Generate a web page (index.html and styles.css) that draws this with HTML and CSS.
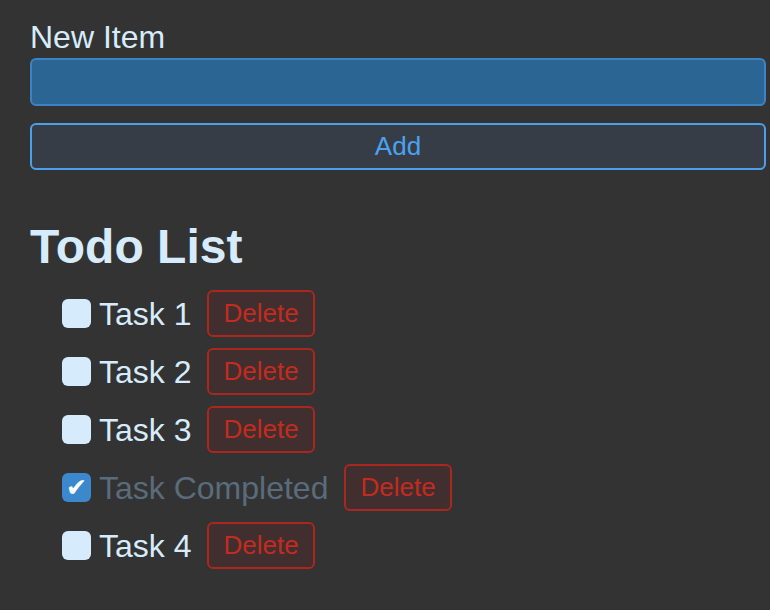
FILE: index.html
```html
<!DOCTYPE html>
<html>
<head>
<meta charset="utf-8">
<link rel="stylesheet" href="styles.css">
</head>
<body>
<div class="app">
  <label class="label">New Item</label>
  <div class="input"></div>
  <button class="add">Add</button>
  <h1 class="title">Todo List</h1>
  <ul class="list">
    <li class="row"><span class="box"></span><span class="text">Task 1</span><button class="del">Delete</button></li>
    <li class="row"><span class="box"></span><span class="text">Task 2</span><button class="del">Delete</button></li>
    <li class="row"><span class="box"></span><span class="text">Task 3</span><button class="del">Delete</button></li>
    <li class="row done"><span class="box checked">✔</span><span class="text">Task Completed</span><button class="del">Delete</button></li>
    <li class="row"><span class="box"></span><span class="text">Task 4</span><button class="del">Delete</button></li>
  </ul>
</div>
</body>
</html>
```
FILE: styles.css
```css
html, body {
  margin: 0;
  padding: 0;
  background: #333333;
  font-family: "Liberation Sans", Arial, sans-serif;
}
.app {
  padding: 19px 4px 20px 30px;
  display: flex;
  flex-direction: column;
}
.label {
  display: block;
  font-size: 32px;
  line-height: 36px;
  color: #d6ecfc;
}
.input {
  margin-top: 3px;
  height: 48px;
  box-sizing: border-box;
  background: #2a6593;
  border: 2px solid #3a84c6;
  border-radius: 6px;
}
.add {
  margin-top: 17px;
  height: 47px;
  box-sizing: border-box;
  background: #363d47;
  border: 2px solid #4aa0ea;
  border-radius: 6px;
  color: #4aa3f0;
  font-family: inherit;
  font-size: 26px;
  padding: 0;
}
.title {
  margin: 49px 0 0 0;
  font-size: 48px;
  line-height: 56px;
  font-weight: bold;
  color: #d6ecfc;
}
.list {
  list-style: none;
  margin: 15px 0 0 0;
  padding: 0 0 0 32px;
  display: flex;
  flex-direction: column;
  gap: 11px;
}
.row {
  display: flex;
  align-items: center;
  height: 47px;
}
.box {
  width: 29px;
  height: 29px;
  border-radius: 6px;
  background: #d6ecfc;
  box-sizing: border-box;
  display: flex;
  align-items: center;
  justify-content: center;
  font-size: 25px;
  color: #ffffff;
}
.box.checked {
  background: #3b88cc;
}
.text {
  margin-left: 8px;
  font-size: 32px;
  line-height: 36px;
  color: #d6ecfc;
}
.done .text {
  color: #5a6c7b;
}
.del {
  margin-left: 16px;
  height: 47px;
  box-sizing: border-box;
  padding: 0 14px;
  background: #412e2e;
  border: 2px solid #a8271f;
  border-radius: 6px;
  color: #c42b20;
  font-family: inherit;
  font-size: 26px;
}
```
